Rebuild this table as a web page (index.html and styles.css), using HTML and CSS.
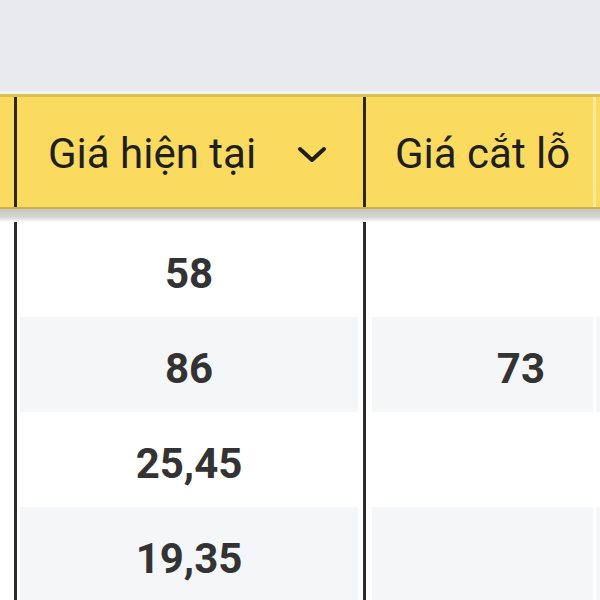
FILE: index.html
```html
<!DOCTYPE html>
<html lang="vi">
<head>
<meta charset="utf-8">
<title>Bảng giá</title>
<link rel="stylesheet" href="styles.css">
</head>
<body>
<div class="page">
  <div class="toolbar"></div>
  <div class="toolbar-edge"></div>
  <div class="row head">
    <div class="cell stub"></div>
    <div class="vline"></div>
    <div class="cell hcell cur"><span class="label">Giá hiện tại</span>
      <svg class="chev" width="30" height="18" viewBox="0 0 30 18"><path d="M3 3 L15 14 L27 3" fill="none" stroke="#1e1e1e" stroke-width="4" stroke-linecap="round" stroke-linejoin="round"/></svg>
    </div>
    <div class="vline"></div>
    <div class="cell hcell stop"><span class="label">Giá cắt lỗ</span></div>
    <div class="gapline"></div>
    <div class="cell hcell more"></div>
  </div>
  <div class="band"></div>
  <div class="row body">
    <div class="cell stub"></div>
    <div class="vline"></div>
    <div class="cell num cur"><span>58</span></div>
    <div class="vline"></div>
    <div class="cell num stop"><span></span></div>
    <div class="gapline light"></div>
    <div class="cell num more"></div>
  </div>
  <div class="row body alt">
    <div class="cell stub"></div>
    <div class="vline"></div>
    <div class="cell num cur"><span>86</span></div>
    <div class="vline"></div>
    <div class="cell num stop"><span>73</span></div>
    <div class="gapline light"></div>
    <div class="cell num more"></div>
  </div>
  <div class="row body">
    <div class="cell stub"></div>
    <div class="vline"></div>
    <div class="cell num cur"><span>25,45</span></div>
    <div class="vline"></div>
    <div class="cell num stop"><span></span></div>
    <div class="gapline light"></div>
    <div class="cell num more"></div>
  </div>
  <div class="row body alt">
    <div class="cell stub"></div>
    <div class="vline"></div>
    <div class="cell num cur"><span>19,35</span></div>
    <div class="vline"></div>
    <div class="cell num stop"><span></span></div>
    <div class="gapline light"></div>
    <div class="cell num more"></div>
  </div>
</div>
</body>
</html>
```
FILE: styles.css
```css
html, body {
  margin: 0;
  padding: 0;
  background: #ffffff;
}
body {
  font-family: Roboto, "Noto Sans", Arial, sans-serif;
  width: 600px;
  height: 600px;
  overflow: hidden;
}
.page {
  width: 600px;
  display: flex;
  flex-direction: column;
}
.toolbar {
  height: 91px;
  background: #e9eaed;
}
.toolbar-edge {
  height: 3px;
  background: #f4f4f6;
}
.row {
  display: grid;
  grid-template-columns: 14px 3px 346px 3px 227px 3px 1fr;
}
.head {
  height: 110px;
  background: #fbdb5f;
  border-top: 3px solid #d9c255;
  border-bottom: 2px solid #c9b24c;
}
.vline {
  background: #2f2517;
}
.gapline {
  background: #fde99c;
}
.gapline.light {
  background: #ffffff;
}
.hcell {
  display: flex;
  align-items: center;
  font-size: 42px;
  color: #1f1f1f;
  padding-top: 2px;
}
.hcell.cur {
  padding-left: 31px;
  padding-right: 36px;
  justify-content: space-between;
}
.hcell.stop {
  padding-left: 29px;
}
.chev {
  display: block;
  margin-top: 4px;
}
.band {
  height: 13px;
  background: linear-gradient(#c6c6c2, #d4d4d1 60%, #ececec 85%, #ffffff);
}
.body {
  height: 95px;
}
.body .vline {
  background: #2b2b2b;
}
.num {
  display: flex;
  align-items: center;
  font-size: 42px;
  font-weight: 700;
  color: #333333;
  background-clip: content-box;
}
.num span {
  padding-top: 7px;
}
.num.cur {
  justify-content: center;
  padding: 0 5px 0 3px;
}
.num.stop {
  justify-content: flex-end;
  padding: 0 0 0 6px;
}
.num.stop span {
  padding-right: 48px;
}
.body.alt .num {
  background-color: #f5f6f8;
}
```
